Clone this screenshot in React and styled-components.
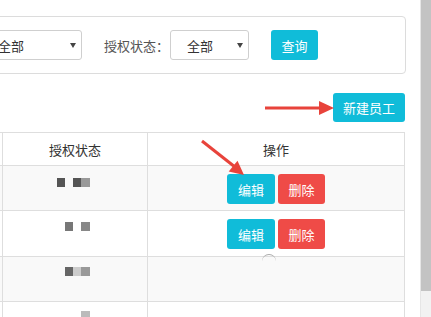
import React from 'react'
import styled, { createGlobalStyle } from 'styled-components'

const GlobalStyle = createGlobalStyle`
  html, body {
    margin: 0;
    padding: 0;
    background: #fff;
    overflow: hidden;
  }
  body {
    font-family: "Noto Sans CJK SC", "Microsoft YaHei", sans-serif;
    font-size: 13px;
    color: #333;
  }
`;

const Page = styled.div`
  position: relative;
  display: flex;
  width: 431px;
  height: 317px;
  overflow: hidden;
`;

const Main = styled.div`
  flex: none;
  width: 446px;
  margin-left: -40px;
  padding-top: 16px;
`;

const Panel = styled.div`
  display: flex;
  align-items: center;
  height: 58px;
  box-sizing: border-box;
  padding-left: 20px;
  border: 1px solid #dcdcdc;
  border-radius: 4px;
`;

const Select = styled.div`
  position: relative;
  display: flex;
  align-items: center;
  width: ${({ $w }) => $w}px;
  height: 30px;
  box-sizing: border-box;
  padding-left: ${({ $pad }) => $pad}px;
  margin-right: ${({ $mr }) => $mr}px;
  border: 1px solid #cfcfcf;
  border-radius: 3px;
  color: #333;
  &::after {
    content: "";
    position: absolute;
    right: 5px;
    top: 12px;
    border-left: 3px solid transparent;
    border-right: 3px solid transparent;
    border-top: 5px solid #444;
  }
`;

const Label = styled.span`
  width: 66px;
  color: #555;
  white-space: nowrap;
`;

const Button = styled.button`
  display: inline-flex;
  align-items: center;
  justify-content: center;
  width: ${({ $w }) => $w}px;
  height: ${({ $h }) => $h || 30}px;
  margin: 0;
  padding: 0;
  border: none;
  border-radius: 3px;
  background: ${({ $danger }) => ($danger ? '#ef4b47' : '#10bcd9')};
  color: #fff;
  font-family: inherit;
  font-size: 13px;
`;

const ActionBar = styled.div`
  display: flex;
  justify-content: flex-end;
  padding: 19px 1px 10px 0;
`;

const Table = styled.div`
  width: 445px;
  border-top: 1px solid #dedede;
`;

const Row = styled.div`
  display: grid;
  grid-template-columns: 43px 145px 257px;
  height: ${({ $h }) => $h}px;
  box-sizing: border-box;
  border-bottom: 1px solid #dedede;
  background: ${({ $striped }) => ($striped ? '#f9f9f9' : '#fff')};
`;

const Cell = styled.div`
  position: relative;
  display: flex;
  justify-content: ${({ $left }) => ($left ? 'flex-start' : 'center')};
  align-items: ${({ $head }) => ($head ? 'center' : 'flex-start')};
  gap: 3px;
  padding-top: ${({ $top }) => $top || 0}px;
  padding-left: ${({ $left }) => $left || 0}px;
  box-sizing: border-box;
  border-right: 1px solid #dedede;
  color: #333;
`;

const Mosaic = styled.div`
  display: flex;
  margin-right: 4px;
`;

const Dot = styled.span`
  width: 8.25px;
  height: 8.5px;
  background: ${({ $c }) => $c || 'transparent'};
`;

const Arc = styled.span`
  position: absolute;
  left: 114px;
  top: -3px;
  width: 14px;
  height: 14px;
  border-radius: 50%;
  border-top: 1.5px solid #aaa;
  box-sizing: border-box;
`;

const Scrollbar = styled.div`
  flex: none;
  display: flex;
  flex-direction: column;
  width: 10px;
  margin-left: auto;
  background: #f2f2f2;
  border-left: 1px solid #e6e6e6;
`;

const Thumb = styled.div`
  height: 291px;
  background: #c3c3c3;
`;

const Overlay = styled.svg`
  position: absolute;
  left: 0;
  top: 0;
  pointer-events: none;
`;

const rows = [
  { striped: true, dots: ['#555', null, '#555', '#999'], top: 12, h: 45 },
  { striped: false, dots: [null, '#777', null, '#888'], top: 11, h: 46 },
  { striped: true, dots: [null, '#666', '#ccc', '#999'], top: 10, h: 45, arc: true },
  { striped: false, dots: [null, null, null, '#bbb'], top: 9, h: 45 },
];

const App = () => {
  return (
    <>
      <GlobalStyle />
      <Page>
        <Main>
          <Panel>
            <Select $w={101} $pad={16} $mr={22}>全部</Select>
            <Label>授权状态：</Label>
            <Select $w={79} $pad={16} $mr={22}>全部</Select>
            <Button $w={47}>查询</Button>
          </Panel>

          <ActionBar>
            <Button $w={72} $h={29}>新建员工</Button>
          </ActionBar>

          <Table>
            <Row $h={33}>
              <Cell $head />
              <Cell $head>授权状态</Cell>
              <Cell $head>操作</Cell>
            </Row>
            {rows.map((r, i) => (
              <Row key={i} $h={r.h} $striped={r.striped}>
                <Cell />
                <Cell $top={r.top}>
                  <Mosaic>
                    {r.dots.map((c, j) => (
                      <Dot key={j} $c={c} />
                    ))}
                  </Mosaic>
                </Cell>
                <Cell $left={i < 2 ? 79 : 0} $top={8}>
                  {i < 2 && (
                    <>
                      <Button $w={48}>编辑</Button>
                      <Button $w={47} $danger>删除</Button>
                    </>
                  )}
                  {r.arc && <Arc />}
                </Cell>
              </Row>
            ))}
          </Table>
        </Main>
        <Scrollbar>
          <Thumb />
        </Scrollbar>

        <Overlay width="431" height="317" viewBox="0 0 431 317">
          <line x1="265" y1="108" x2="322" y2="108" stroke="#e8433b" strokeWidth="3" />
          <polygon points="319,101 334,108 319,115" fill="#e8433b" />
          <line x1="202" y1="141" x2="235" y2="167" stroke="#e8433b" strokeWidth="3" />
          <polygon points="244,175 228.7,171.6 237.5,160.8" fill="#e8433b" />
        </Overlay>
      </Page>
    </>
  )
}

export default App
